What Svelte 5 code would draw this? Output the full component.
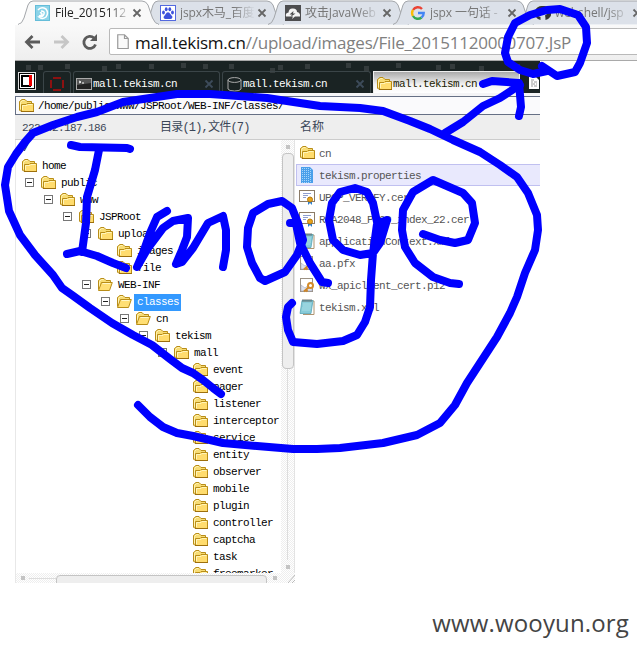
<script>
  const tabs = [
    { title: 'File_2015112', icon: 'swirl', active: true },
    { title: 'jspx木马_百度', icon: 'paw' },
    { title: '攻击JavaWeb', icon: 'cloud' },
    { title: 'jspx 一句话 -', icon: 'google' },
    { title: 'webshell/jsp', icon: 'github' }
  ];
  // [name, depth, expander, open folder]
  const tree = [
    ['home', 0], ['public', 1, 1], ['www', 2, 1], ['JSPRoot', 3, 1], ['upload', 4, 1],
    ['images', 5], ['file', 5], ['WEB-INF', 4, 1, 1], ['classes', 5, 1, 1], ['cn', 6, 1, 1],
    ['tekism', 7, 1], ['mall', 8, 1], ['event', 9], ['pager', 9], ['listener', 9],
    ['interceptor', 9], ['service', 9], ['entity', 9], ['observer', 9], ['mobile', 9],
    ['plugin', 9], ['controller', 9], ['captcha', 9], ['task', 9], ['freemarker', 9]
  ];
  const files = [
    ['cn', 'folder'], ['tekism.properties', 'blue'], ['UPOP_VERIFY.cer', 'cert'],
    ['RSA2048_PROD_index_22.cer', 'cert'], ['applicationContext.xml', 'note'],
    ['aa.pfx', 'key'], ['wx_apiclient_cert.p12', 'key'], ['tekism.xml', 'note']
  ];
  const specks = [[11,4],[23,4],[50,3],[87,5],[101,3],[134,3],[166,2],[188,3],[214,3],[255,7],[263,4],[290,3],[331,2],[349,5],[381,2],[421,4],[435,3],[464,5],[500,3]];
  const strokes = [
    '221,394 213,388 203,380 193,373 182,368 170,359 152,345 133,335 112,323 90,308 72,295 62,288 53,275 35,255 20,235 9,211 5,185 8,167 16,154 25,142 33,133 53,125 77,117 97,112 123,102 150,98 177,94 210,94 267,98 320,106 360,108 383,111 410,121 430,129 453,140 480,152 500,165 517,177 528,193 537,215 538,230 535,250 525,273 517,297 510,313 497,337 467,383 455,405 440,423 417,435 383,443 340,448 317,449 293,449 257,446 223,443 193,436 177,433 163,427 150,417 138,405',
    '71,145 80,147 127,148 130,149',
    '99,150 95,170 87,197 86,223 82,252',
    '67,254 80,251 97,256 113,263 126,268',
    '167,211 157,217 150,233 143,253 137,267 148,248 163,228 173,221 188,218 187,237 182,250 176,264 182,262 193,248 208,223 223,216 226,230 226,250 223,267',
    '290,223 298,223 292,208 282,201 268,204 253,213 248,228 247,247 252,263 260,278 265,281 285,272 297,255 303,240 298,223',
    '296,224 300,243 310,263 322,282 328,283',
    '377,222 373,203 367,192 355,188 340,192 332,203 329,220 333,240 343,250 360,255 373,253 380,243 387,220 377,224 373,253 371,280 370,307 365,322 357,335 343,341 317,344 293,342 288,330 286,317 288,307 292,303',
    '423,234 440,240 455,243 468,240 475,223 472,203 463,193 433,180 413,192 403,210 402,230 405,247 415,263 433,277 450,283 459,284',
    '542,66 548,70 557,76 575,72 580,63 587,43 586,27 578,15 560,9 547,10 530,15 515,23 508,37 505,53 508,62 520,70 533,74 547,71',
    '445,133 463,122 483,106 500,98 520,85',
    '483,84 492,81 519,83 521,107 519,116'
  ];
</script>

{#snippet folder(open)}
  <svg class="ic" width="16" height="16" viewBox="0 0 16 16">
    <path d="M1.500 12.500V4Q1.500 3 2.500 2.500L4 1.500H7L9 3.500H13.500V6" fill="#f7dc74" stroke="#b98d17" />
    <path d="M2.500 11V4.500L4.500 2.500H6.500" fill="none" stroke="#fff3b4" />
    {#if open}
      <path d="M1.500 13.500L4.500 5.500H15.300L12.500 13.500Z" fill="#ffdf75" stroke="#b98d17" />
      <path d="M5.500 6.500H13.500" stroke="#fff8cb" />
    {:else}
      <path d="M1.500 12L3.500 13.500V6.500H8L9 5.500H15.500V13.500H3.500" fill="#ffdc6e" stroke="#b98d17" />
      <path d="M4.500 12V7.500H9L10 6.500H14.500" fill="none" stroke="#fff5bb" />
      <path d="M3 13.500H16" stroke="#9d6f0c" />
    {/if}
  </svg>
{/snippet}

{#snippet cross(c)}
  <svg class="cross" width="10" height="10" viewBox="0 0 10 10"><path d="M1.500 1.500l7 7M8.500 1.500l-7 7" stroke={c} stroke-width="1.800" /></svg>
{/snippet}

<div class="page">
  <div class="strip">
    {#each tabs as t}
      <div class="tab" class:active={t.active}>
        <svg class="shape" width="142" height="26" viewBox="-1 0 142 26">
          <path d="M-1 24.500Q3 24 5 18L9 5Q10.500 1 14 1H123Q127 1 129 5L133.500 18Q136 24 140 24.500" fill={t.active ? '#f9f9f9' : '#dce1e9'} stroke="#a3a6aa" />
          {#if t.active}<path d="M0 25H139" stroke="#f9f9f9" stroke-width="2" />{/if}
        </svg>
        <svg class="fav" width="16" height="16" viewBox="0 0 16 16">
          {#if t.icon === 'swirl'}
            <rect x=".5" y=".5" width="14" height="15" fill="#8bd3e8" stroke="#65bdd9" />
            <path d="M3 5Q6 1 11 4Q14 8 11 12Q7 15 4 12Q8 12 9 9T6 6M5 8Q7 7 7 10L4 11" fill="none" stroke="#fff" stroke-width="1.500" />
          {:else if t.icon === 'paw'}
            <rect x=".5" y=".5" width="15" height="15" fill="#fff" stroke="#5369df" />
            <g fill="#3d52dc"><ellipse cx="3.500" cy="7.500" rx="1.400" ry="1.900" /><ellipse cx="6.200" cy="4.200" rx="1.400" ry="2" /><ellipse cx="9.800" cy="4.200" rx="1.400" ry="2" /><ellipse cx="12.500" cy="7.500" rx="1.400" ry="1.900" /><path d="M8 7.300q1.500 0 2.500 2l2 2.500q0 2.500-2.500 2.200H6q-2.500.3-2.500-2l2-2.700Q6.500 7.300 8 7.300" /></g>
          {:else if t.icon === 'cloud'}
            <rect width="16" height="16" fill="#4d4d4f" />
            <path d="M1 11.500Q0 8 3.500 7.500Q4 3 8 3.500Q12 3.500 12 7Q15.500 7.500 15 11.500H10L7 14L8 11.500Z" fill="#f4f4f4" />
            <path d="M8.500 6L4.500 9.500H7L5.500 12L10.500 8.500H8Z" fill="#4d4d4f" />
          {:else if t.icon === 'google'}
            <g fill="none" stroke-width="2.400"><path d="M3 5A5.700 5.700 0 0 1 12 4" stroke="#ea4335" /><path d="M3 5A5.700 5.700 0 0 0 3 11" stroke="#fbbc05" /><path d="M3 11A5.700 5.700 0 0 0 11.500 12.500" stroke="#34a853" /><path d="M11.500 12.500Q13.700 11 13.700 8H8" stroke="#4285f4" /></g>
          {:else}
            <path d="M8 1A7 7 0 0 0 5.500 15V12Q3.500 12 3 10Q5 12 6 10.500Q3 9.500 4 6L4 4L6 5H10L12 4V6Q13 9.500 10 10.500Q10.500 12 10.500 15A7 7 0 0 0 8 1" fill="#333" />
          {/if}
        </svg>
        <span class="title">{t.title}</span>
        {@render cross('#666')}
      </div>
    {/each}
  </div>

  <div class="toolbar">
    <svg width="84" height="22" viewBox="0 0 84 22" fill="none" stroke-width="2.800">
      <path d="M16 11H3M8.500 5L2.500 11L8.500 17" stroke="#5b5b5b" />
      <path d="M30 11H43M37.500 5L43.500 11L37.500 17" stroke="#c6c6c6" />
      <path d="M71.500 13.500A6 6 0 1 1 70 7" stroke="#5b5b5b" /><path d="M73 3V10H66Z" fill="#5b5b5b" />
    </svg>
    <div class="url">
      <svg width="12" height="16" viewBox="0 0 12 16"><path d="M.75.75H7.500L11.250 4.500V14.500H.75ZM7.500 .75V4.500H11" fill="#fafafa" stroke="#999" stroke-width="1.200" /></svg>
      <span><b>mall.tekism.cn</b>//upload/images/File_20151120000707.JsP</span>
    </div>
  </div>

  <main>
    <div class="dark">
      <svg class="specks" width="525" height="14">{#each specks as s}<rect x={s[0]} y={s[1]} width="5" height="5" fill="#343b3c" />{/each}</svg>
      <svg class="logo" width="18" height="18" viewBox="0 0 18 18"><rect width="18" height="18" fill="#ddd" /><rect x="1.500" y="1.500" width="15" height="15" fill="#fff" stroke="#000" /><rect x="4" y="4" width="8" height="10" fill="#fff" stroke="#000" stroke-width="2" /><rect x="11" y="3" width="3" height="11" fill="#e00" /></svg>
      <div class="dt small"><svg width="14" height="14" viewBox="0 0 14 14"><rect x="1" y="1" width="12" height="12" fill="none" stroke="#f00" stroke-dasharray="8 4" stroke-dashoffset="-2" /></svg></div>
      <div class="dt t2">
        <svg width="16" height="12" viewBox="0 0 16 12"><rect x=".5" y=".5" width="15" height="11" fill="#222" stroke="#aaa" /><path d="M1 1H15V5L1 7" fill="#555" /><path d="M3 3l2 1l-2 1M6 5h2" stroke="#fff" fill="none" /></svg>
        <span>mall.tekism.cn</span>{@render cross('#3d4b5a')}
      </div>
      <div class="dt t3">
        <svg width="15" height="15" viewBox="0 0 15 15" fill="none" stroke="#aaa"><ellipse cx="7.500" cy="3" rx="6.500" ry="2.400" /><path d="M1 3V12Q2 14 7.500 14T14 12V3" /></svg>
        <span>mall.tekism.cn</span>{@render cross('#3d4b5a')}
      </div>
      <div class="dt t4">{@render folder(false)}<span>mall.tekism.cn</span></div>
      <svg class="doc" width="10" height="12" viewBox="0 0 10 12"><path d="M0 0H7L10 3V12H0Z" fill="#fff" /><path d="M2 3h3M2 5h2m1 0h3M2 7h4m1 0h1M2 9h2m1 0h3" stroke="#999" /></svg>
    </div>

    <div class="path">{@render folder(false)}<span>/home/public/www/JSPRoot/WEB-INF/classes/</span></div>
    <div class="status"><span class="ip">222.42.187.186</span><span class="count">目录(1),文件(7)</span><span>名称</span></div>

    <div class="body">
      <div class="left">
        <div class="tree">
          <div class="row root">/</div>
          {#each tree as [name, depth, exp, open]}
            <div class="row" style:padding-left="{depth * 19 - (depth ? 10 : -5)}px">
              {#if depth}<i class="exp" class:on={exp}></i>{/if}
              {@render folder(open)}
              <span class:sel={name === 'classes'}>{name}</span>
            </div>
          {/each}
        </div>
        <div class="vbar"><i class="dot"></i><div class="vtrack"><div class="vthumb"></div></div><i class="dot"></i></div>
        <div class="hbar"><i class="dot"></i><div class="hline"></div><div class="hthumb"></div><i class="dot"></i>
          <svg width="7" height="9" viewBox="0 0 7 9"><path d="M0 9L7 1M4 9L7 6" stroke="#bbb" /></svg></div>
      </div>
      <div class="files">
        {#each files as [name, kind], i}
          <div class="file" class:hl={i === 1}>
            {#if kind === 'folder'}{@render folder(false)}
            {:else}
              <svg class="ic" width="16" height="16" viewBox="0 0 16 16">
                {#if kind === 'blue'}
                  <path d="M2 0H11L14 3V16H2Z" fill="#4a9fea" /><path d="M3.500 1V16M5.500 1V16M7.500 1V16M9.500 1V16M11.500 2V16" stroke="#a7d5fa" stroke-dasharray="1 1" />
                {:else if kind === 'cert'}
                  <rect x=".5" y="1.500" width="15" height="11" fill="#fff" stroke="#8b7b68" /><path d="M4 4.500H12M4 6.500H9M4 8.500H7" stroke="#8e9ed0" /><path d="M9 11V16L11 14L13 16V11" fill="#2c7fd0" /><circle cx="11" cy="10.500" r="2.500" fill="#e9a51c" stroke="#b6780c" />
                {:else if kind === 'key'}
                  <rect x="1.500" y="1.500" width="12" height="13" fill="#fff" stroke="#9b9184" /><path d="M2 8L6 11L13 5V14H2Z" fill="#dce2ef" stroke="#aab" stroke-width=".6" /><path d="M10 10L5 14.500M7 13l1.500 1.500" stroke="#ce8628" stroke-width="2" /><circle cx="11.500" cy="8.500" r="2.500" fill="#fff" stroke="#d48b2a" stroke-width="2" />
                {:else}
                  <path d="M4 2H15V15.500H4" fill="#fff" stroke="#ad9471" /><path d="M3 1.500H14L12 14.500H1Z" fill="#87cbd8" stroke="#4b9eb0" stroke-width=".7" /><path d="M4 5H12M4 7H12M3 9H12M3 11H11" stroke="#b8e5ec" stroke-width=".7" /><path d="M4 0V3M6 0V3M8 0V3M10 0V3M12 0V3" stroke="#555" stroke-width=".8" />
                {/if}
              </svg>
            {/if}
            <span>{name}</span>
          </div>
        {/each}
      </div>
    </div>
  </main>
  <footer>www.wooyun.org</footer>

  <svg class="ink" width="637" height="652" viewBox="0 0 637 652">
    {#each strokes as s}<polyline points={s} />{/each}
  </svg>
</div>

<style>
  .page { position: relative; width: 637px; height: 652px; overflow: hidden; background: #fff; font: 11px/17px "Liberation Mono", "Noto Sans CJK SC", monospace; letter-spacing: -0.6px; color: #000; white-space: nowrap; }
  .page svg { flex: none; display: block; }
  .strip { display: flex; height: 25px; padding-left: 19px; font: 12px/24px "Open Sans", "Noto Sans CJK SC", sans-serif; letter-spacing: -0.1px; color: #777; overflow: hidden; }
  .tab { position: relative; flex: none; width: 125px; box-sizing: border-box; padding: 1px 0 0 16px; display: flex; align-items: center; }
  .tab.active { z-index: 2; color: #222; }
  .shape { position: absolute; left: -1px; top: 0; }
  .fav, .tab .cross, .title { position: relative; }
  .title { flex: none; width: 74px; height: 24px; margin-left: 4px; -webkit-mask-image: linear-gradient(90deg, #000 72%, transparent 102%); mask-image: linear-gradient(90deg, #000 72%, transparent 102%); }
  .tab .cross { margin-left: 3px; }
  .toolbar { display: flex; align-items: center; height: 36px; box-sizing: border-box; margin-left: 15px; padding: 0 0 2px 9px; background: linear-gradient(#f9f9f9, #eee); border-bottom: 1px solid #a9a9a9; }
  .url { display: flex; align-items: center; width: 560px; flex: none; height: 25px; margin-left: 1px; padding-left: 7px; background: #fff; border: 1px solid #b9b9b9; border-radius: 2px; font: 17px/24px "Open Sans", sans-serif; letter-spacing: -0.23px; color: #808080; }
  .url span { margin: 2px 0 0 6px; }
  .url b { font-weight: 400; color: #111; }
  main { width: 525px; margin-left: 15px; }
  .dark { position: relative; display: flex; align-items: flex-end; height: 32px; background: #1a2323; border-bottom: 3px solid #f4f4f6; color: #fff; }
  .specks { position: absolute; left: 0; top: 0; }
  .logo { margin: 0 7px 3px 3px; }
  .dt { position: relative; display: flex; align-items: center; box-sizing: border-box; height: 22px; border: 1px solid #3b4548; border-bottom: 0; border-radius: 3px 3px 0 0; padding: 3px 0 0 2px; }
  .small { width: 28px; margin-right: 2px; padding-left: 6px; }
  .t2 { width: 147px; margin-right: 2px; }
  .t3 { width: 149px; margin-right: 2px; padding-left: 4px; }
  .t4 { width: 147px; background: linear-gradient(#aaa, #f2f2f2 60%, #fff); border-color: #eee; color: #220; border-radius: 0; }
  .dt span { margin-left: 1px; }
  .dt .cross { margin-left: auto; margin-right: 5px; }
  .doc { margin: 0 0 4px 9px; }
  .path { display: flex; align-items: center; box-sizing: border-box; height: 19px; border: 1px solid #667085; border-right: 0; background: #fafafc; padding-left: 2px; }
  .path span { margin: 2px 0 0 4px; }
  .status { display: flex; align-items: center; box-sizing: border-box; height: 25px; padding: 2px 0 0 7px; background: #eee; border-bottom: 1px solid #ccc; color: #3b4657; }
  .ip { width: 138px; }
  .count { width: 140px; }
  .status .count, .status span:last-child { font-size: 12px; letter-spacing: -0.8px; }
  .status span:last-child { letter-spacing: 0; }
  .body { display: flex; height: 443px; }
  .left { display: grid; grid-template: 433px 10px / 265px 14px; width: 280px; box-sizing: border-box; border-left: 1px solid #e8e8e8; }
  .tree { overflow: hidden; }
  .row { display: flex; align-items: center; height: 17px; }
  .root { padding-left: 7px; }
  .row > span { margin: 1px 0 0 2px; padding: 0 2px 0 3px; }
  .row .sel { background: #3399ff; color: #fff; }
  .exp { flex: none; width: 9px; height: 9px; box-sizing: border-box; margin-right: 6px; }
  .exp.on { border: 1px solid #777; background: linear-gradient(#222, #222) center / 5px 1px no-repeat; }
  .vbar, .hbar { background: repeating-conic-gradient(#eee 0 25%, #fff 0 50%) 0 0 / 2px 2px; }
  .vbar { display: flex; flex-direction: column; align-items: center; padding: 5px 0 4px; box-sizing: border-box; border-right: 1px solid #e3e3e3; }
  .dot { flex: none; width: 4px; height: 4px; background: #c4c4c4; }
  .vtrack { flex: 1; margin: 4px 0 5px; width: 12px; background: linear-gradient(#ddd, #ddd) center / 1px 100% no-repeat; }
  .vthumb { height: 214px; border: 1px solid #c4c4c4; border-radius: 4px; background: #eee; }
  .hbar { grid-column: 1 / 3; display: flex; align-items: center; padding-left: 5px; overflow: hidden; }
  .hline { width: 27px; height: 1px; margin-left: 4px; background: #ddd; }
  .hthumb { width: 211px; height: 14px; box-sizing: border-box; margin: 7px 6px 0 0; border: 1px solid #c4c4c4; border-radius: 4px; background: #eee; }
  .hbar svg { margin-left: auto; }
  .files { width: 245px; padding-top: 2px; color: #555; }
  .file { display: flex; align-items: center; height: 22px; box-sizing: border-box; margin-left: 1px; padding-left: 2px; border: 1px solid transparent; border-right: 0; }
  .file span { margin: 2px 0 0 4px; }
  .hl { background: #e9e9fd; border-color: #c0c0f0; }
  footer { margin: 24px 8px 0 0; text-align: right; font: 24px/32px "Open Sans", sans-serif; letter-spacing: 0.15px; color: #444; }
  .ink { position: absolute; left: 0; top: 0; z-index: 5; fill: none; stroke: #00f; stroke-width: 8; stroke-linecap: round; stroke-linejoin: round; }
</style>
